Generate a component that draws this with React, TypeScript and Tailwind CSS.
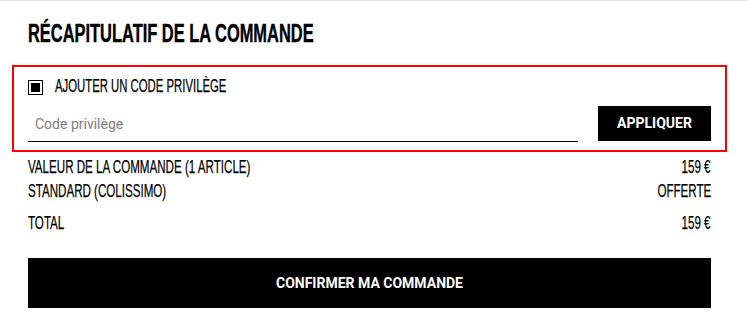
const sans = "font-['Liberation_Sans',Arial,sans-serif]"
const roboto = "font-['Roboto',sans-serif]"

// condensed display text: Liberation Sans squeezed horizontally to approximate Oswald
function Narrow({
  children,
  right = false,
  className = '',
}: {
  children: React.ReactNode
  right?: boolean
  className?: string
}) {
  return (
    <span
      className={`inline-block whitespace-nowrap ${right ? 'origin-right' : 'origin-left'} ${className}`}
    >
      {children}
    </span>
  )
}

function Row({ label, value, className = '' }: { label: string; value: string; className?: string }) {
  return (
    <div className={`flex h-[24px] items-center justify-between leading-[24px] ${className}`}>
      <Narrow className="scale-x-[0.61]">{label}</Narrow>
      <Narrow right className="scale-x-[0.61]">
        {value}
      </Narrow>
    </div>
  )
}

export default function App() {
  return (
    <div className="h-[333px] w-[748px] overflow-hidden border-t border-[#e5e5e5] bg-white text-black">
      <div className="pr-[21px] pl-[12px]">
        <h2
          className={`${sans} mt-[17px] h-[30px] px-[16px] text-[25px] font-bold leading-[30px] [-webkit-text-stroke:0.4px_black]`}
        >
          <Narrow className="scale-x-[0.657]">RÉCAPITULATIF DE LA COMMANDE</Narrow>
        </h2>

        {/* promo code block */}
        <div className="mt-[17px] border-2 border-[#ff0000] px-[14px] pt-[9px] pb-[8px]">
          <label className="flex h-[20px] cursor-pointer items-start gap-[12px]">
            <span className="mt-[4px] flex h-[15px] w-[15px] shrink-0 border border-black p-[2px]">
              <span className="h-full w-full bg-black" />
            </span>
            <span className={`${sans} text-[18px] leading-[20px] [-webkit-text-stroke:0.25px_black]`}>
              <Narrow className="scale-x-[0.63]">AJOUTER UN CODE PRIVILÈGE</Narrow>
            </span>
          </label>
          <div className="mt-[10px] flex items-end gap-[20px]">
            <input
              className={`${roboto} h-[36px] flex-1 border-b border-black px-[7px] text-[14px] outline-none placeholder:text-[#808080]`}
              placeholder="Code privilège"
            />
            <button className={`${roboto} mb-[1px] h-[35px] w-[113px] bg-black text-[14px] font-bold text-white`}>
              APPLIQUER
            </button>
          </div>
        </div>

        <div className={`${sans} px-[16px] text-[19px] [-webkit-text-stroke:0.25px_black]`}>
          <Row className="mt-[3px]" label="VALEUR DE LA COMMANDE (1 ARTICLE)" value="159 €" />
          <Row label="STANDARD (COLISSIMO)" value="OFFERTE" />
          <Row className="mt-[8px]" label="TOTAL" value="159 €" />
        </div>

        <div className="px-[16px]">
          <button className={`${roboto} mt-[23px] h-[50px] w-full bg-black text-[14px] font-bold text-white`}>
            CONFIRMER MA COMMANDE
          </button>
        </div>
      </div>
    </div>
  )
}
